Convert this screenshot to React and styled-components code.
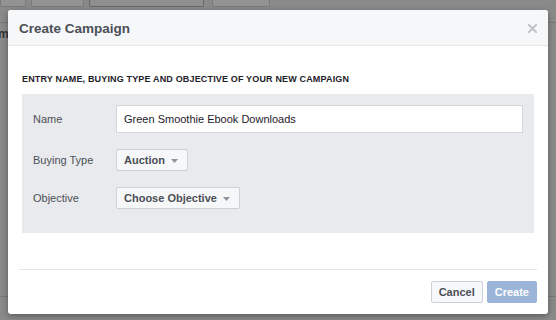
import React from "react";
import styled, { createGlobalStyle } from "styled-components";

const Global = createGlobalStyle`
  html, body { margin: 0; padding: 0; background: #8a8a8a; }
  body { font-family: "Liberation Sans", Arial, Helvetica, sans-serif; }
`;

const Screen = styled.div`
  position: relative;
  width: 556px;
  height: 320px;
  overflow: hidden;
  background: #8a8a8a;
`;

const BackPage = styled.div`
  display: flex;
  flex-direction: column;
  height: 100%;
`;

const TabBar = styled.div`
  display: flex;
  gap: 5px;
  height: 8px;
  padding-left: 0;
`;

const BackTab = styled.div`
  width: ${(p) => p.$w}px;
  margin-left: ${(p) => p.$ml || 0}px;
  height: 7px;
  background: ${(p) => (p.$active ? "#8f8f8f" : "#939393")};
  border: 1px solid ${(p) => (p.$active ? "#666" : "#7a7a7a")};
  border-top: none;
  border-radius: 0 0 2px 2px;
  box-sizing: border-box;
`;

const BackRule = styled.div`
  margin-top: ${(p) => p.$mt}px;
  height: 1px;
  background: #777;
`;

const BackText = styled.div`
  margin-top: 4px;
  margin-left: -2px;
  font-size: 12px;
  font-weight: bold;
  color: #333;
  line-height: 14px;
`;

const Dialog = styled.div`
  position: absolute;
  left: 8px;
  top: 10px;
  width: 540px;
  background: #fff;
  border-radius: 3px;
  box-shadow: 0 2px 6px rgba(0, 0, 0, 0.35);
  overflow: hidden;
`;

const Header = styled.div`
  display: flex;
  align-items: center;
  justify-content: space-between;
  height: 35px;
  padding: 0 11px;
  background: #f6f7f9;
  border-bottom: 1px solid #e5e5e5;
`;

const Title = styled.div`
  font-size: 13.5px;
  font-weight: bold;
  color: #4b4f56;
  padding-top: 1px;
`;

const Close = styled.svg`
  width: 9px;
  height: 9px;
  margin-top: 2px;
`;

const Body = styled.div`
  padding: 28px 14px 36px;
`;

const SectionHeading = styled.div`
  font-size: 9px;
  line-height: 11px;
  letter-spacing: 0.16px;
  font-weight: bold;
  color: #1d2129;
  margin-bottom: 9px;
`;

const Panel = styled.div`
  display: flex;
  flex-direction: column;
  gap: 16px;
  background: #e9eaed;
  padding: 11px 11px 24px;
`;

const Row = styled.div`
  display: flex;
  align-items: center;
`;

const Label = styled.div`
  width: 83px;
  flex-shrink: 0;
  font-size: 11px;
  color: #4b4f56;
`;

const TextInput = styled.div`
  flex: 1;
  height: 28px;
  box-sizing: border-box;
  display: flex;
  align-items: center;
  padding: 0 7px;
  background: #fff;
  border: 1px solid #d3d6db;
  font-size: 11px;
  color: #1d2129;
`;

const Select = styled.div`
  display: flex;
  align-items: center;
  gap: 6px;
  height: 22px;
  box-sizing: border-box;
  padding: 0 9px 0 7px;
  background: #f6f7f9;
  border: 1px solid #ced0d4;
  border-radius: 2px;
  font-size: 11px;
  font-weight: bold;
  color: #4b4f56;
`;

const Caret = styled.svg`
  width: 7px;
  height: 4px;
  margin-top: 1px;
`;

const Footer = styled.div`
  display: flex;
  justify-content: flex-end;
  gap: 4px;
  margin: 0 11px;
  padding: 11px 0;
  border-top: 1px solid #e5e5e5;
`;

const Button = styled.div`
  height: 22px;
  box-sizing: border-box;
  display: flex;
  align-items: center;
  padding: 0 7px;
  border-radius: 2px;
  font-size: 11px;
  font-weight: bold;
  border: 1px solid ${(p) => (p.$primary ? "#9cb4d8" : "#ced0d4")};
  background: ${(p) => (p.$primary ? "#9cb4d8" : "#f6f7f9")};
  color: ${(p) => (p.$primary ? "#fff" : "#4b4f56")};
`;

const DownCaret = () => (
  <Caret viewBox="0 0 7 4">
    <polygon points="0,0 7,0 3.5,4" fill="#8d949e" />
  </Caret>
);

export default function App() {
  return (
    <Screen>
      <Global />
      <BackPage>
        <TabBar>
          <BackTab $w={26} />
          <BackTab $w={53} />
          <BackTab $w={115} $active />
          <BackTab $w={58} $ml={3} />
        </TabBar>
        <BackRule $mt={14} />
        <BackText>m</BackText>
        <BackRule $mt={255} />
      </BackPage>
      <Dialog>
        <Header>
          <Title>Create Campaign</Title>
          <Close viewBox="0 0 9 9">
            <path d="M1 1 L8 8 M8 1 L1 8" stroke="#bec2c9" strokeWidth="2" strokeLinecap="square" />
          </Close>
        </Header>
        <Body>
          <SectionHeading>ENTRY NAME, BUYING TYPE AND OBJECTIVE OF YOUR NEW CAMPAIGN</SectionHeading>
          <Panel>
            <Row>
              <Label>Name</Label>
              <TextInput>Green Smoothie Ebook Downloads</TextInput>
            </Row>
            <Row>
              <Label>Buying Type</Label>
              <Select>
                Auction
                <DownCaret />
              </Select>
            </Row>
            <Row>
              <Label>Objective</Label>
              <Select>
                Choose Objective
                <DownCaret />
              </Select>
            </Row>
          </Panel>
        </Body>
        <Footer>
          <Button>Cancel</Button>
          <Button $primary>Create</Button>
        </Footer>
      </Dialog>
    </Screen>
  );
}
